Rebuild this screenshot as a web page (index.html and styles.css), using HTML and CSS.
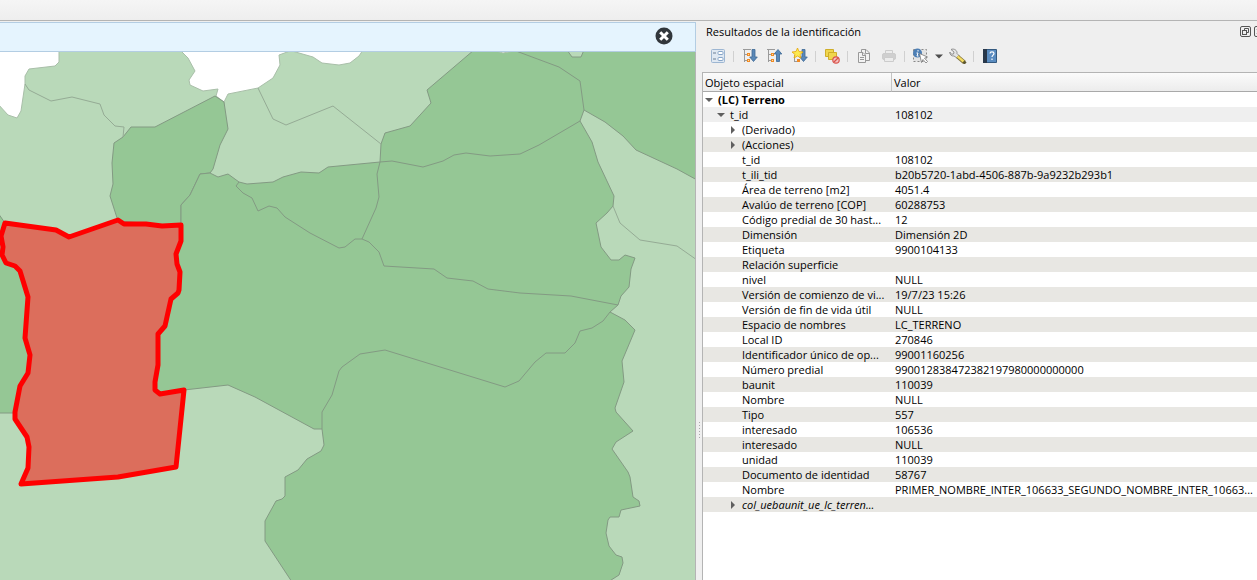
FILE: index.html
```html
<!DOCTYPE html>
<html lang="es">
<head>
<meta charset="utf-8">
<title>Resultados de la identificación</title>
<link rel="stylesheet" href="styles.css">
</head>
<body>
<div class="app">
  <header class="app-toolbar"></header>
  <main class="workspace">
    <section class="map-pane">
      <div class="message-bar">
        <button class="message-close" type="button" aria-label="Cerrar">
          <svg width="18" height="18" viewBox="0 0 18 18"><circle cx="9" cy="9" r="8.5" fill="#31363b"/><path d="M5.200 5.200l7.600 7.600M12.800 5.200l-7.600 7.600" stroke="#fff" stroke-width="3"/></svg>
        </button>
      </div>
      <svg class="map" viewBox="0 52 695 528" preserveAspectRatio="xMinYMin slice" role="img" aria-label="Mapa de terrenos">
        <rect class="plot" y="52" width="695" height="528"/>
        <path class="void" d="M-2 50H59V62L55 66 29 69 25 76V84L21 111 17 118 8 115 -2 104Z"/>
        <path class="void" d="M180 50L188 58 195 71 189 80 190 85 203 91 218 89 216 96 224 102 228 94 258 88 273 78 280 65 279 55 290 51Z"/>
        <path class="void" d="M292 51L313 57 322 63 339 65 350 63 359 56 363 50Z"/>
        <path class="plot-dark" d="M215 96L224 102 228 129 220 145 213 169 210 173 200 174 190 195 181 205V226L118 221 110 196 113 184 112 163 114 143 123 137 131 127H155Z"/>
        <path class="plot-dark" d="M-2 213L5 223 60 250V380L15 413H-2Z"/>
        <path class="plot-dark" d="M200 174L210 173 218 177 228 174 239 182 247 184 273 182 283 177 301 172 319 173 328 167 380 162 381 144 385 133 410 126 431 103 427 90 474 50H697V180L677 169 636 150 623 136 605 122 584 110 580 121 592 142 598 162 614 196 613 206 607 213 596 223 601 247 611 260H619L625 255 635 258 631 269 629 287 621 296 618 305 610 312 625 320 635 330 622 361 624 382 615 408 616 412 633 431 616 442 612 449 628 472 630 477 633 497 639 501 640 506 621 510 619 517H610L608 520 606 533 609 546 616 555 622 557 623 563 619 575 608 582H292L265 541V521L276 501 282 499 285 496V477L298 470 307 459 321 451 324 445 322 429H314L255 397 228 385 184 390 160 394 140 394 181 226V205L190 195Z"/>
        <path class="plot-notch" d="M567 50L572 57H581L584 50Z"/>
        <path class="void" d="M496 51L503 53 514 51Z"/>
        <path class="edge-light" d="M25 84L29 90 51 101 72 97 100 104 104 115 115 126 124 127 123 137M258 88L273 119 286 125 333 106 381 144M613 206L620 223 640 240 677 246 697 260"/>
        <path class="edge" d="M380 162L392 161 423 167 443 161 454 155 466 153 490 156 520 154 539 145 580 121M516 51L559 67 580 81 584 110M380 162L377 174 379 197 376 208 362 239M239 182L236 186 243 193 252 198 258 211 269 206 277 208 285 217 310 233 339 248 345 247 355 239H362L369 242 379 252 384 266 434 269 447 278 473 281 488 289 520 293 571 296 618 305M610 312L603 321 592 328 580 331 575 343 565 353H546L535 362 519 381 505 387 385 350 360 354 342 367 339 371 332 395 322 412V429"/>
        <path class="selection" d="M5 223L56 230 69 237 118 220 124 224 146 224 162 226 181 225V241L176 254 177 264 180 272 179 290 178 293 171 299 165 326 158 334V365L155 382V390L160 394 184 390 176 467 118 477 21 484 28 468 29 447 27 437 15 419V412L20 386 28 373 30 355 25 338 28 297 20 271 15 266 6 263 2 255 3 247 1 236Z"/>
      </svg>
    </section>
    <div class="splitter"><i></i><i></i><i></i><i></i><i></i><i></i></div>
    <aside class="dock">
      <div class="dock-title">
        <h1>Resultados de la identificación</h1>
        <div class="dock-buttons">
          <button type="button" aria-label="Desacoplar"><svg width="12" height="12" viewBox="0 0 12 12" fill="none" stroke="#555"><rect x=".5" y=".5" width="10" height="10" rx="1.500"/><path d="M4.500 4V2.500H8.500V6.500H7"/><rect x="2.500" y="4.500" width="4" height="4"/></svg></button>
          <button type="button" aria-label="Cerrar panel"><svg width="12" height="12" viewBox="0 0 12 12" fill="none" stroke="#555"><rect x=".5" y=".5" width="10" height="10" rx="1.500"/><path d="M3 3l5 5M8 3l-5 5" stroke-width="1.500"/></svg></button>
        </div>
      </div>
      <div class="dock-toolbar">
        <button type="button" aria-label="Ver formulario"><svg width="16" height="16" viewBox="0 0 16 16"><rect x="1.500" y="1.500" width="13" height="13" rx="1" fill="#dfe8f2" stroke="#9db6d2"/><path d="M3 5h3M3 11h3" stroke="#6b7f95"/><rect x="8" y="3.500" width="5" height="3" rx="1" fill="#fff" stroke="#86a5c8"/><rect x="8" y="9.500" width="5" height="3" rx="1" fill="#fff" stroke="#86a5c8"/></svg></button>
        <span class="separator"></span>
        <button type="button" aria-label="Expandir árbol"><svg width="16" height="16" viewBox="0 0 16 16"><path d="M1 1.500h8M2.500 2v12M3 6.500h3M3 12.500h3" stroke="#9a9a9a" fill="none"/><path d="M5 5h3v3H5zM5 11h3v3H5z" fill="#f08a24"/><path d="M6 6h1v1H6zM6 12h1v1H6z" fill="#ffe0a5"/><path d="M10 1.500h3V9h2.300L11.500 13.500 7.700 9H10z" fill="#5a88b8" stroke="#3c6894" stroke-width=".8"/></svg></button>
        <button type="button" aria-label="Contraer árbol"><svg width="16" height="16" viewBox="0 0 16 16"><path d="M0 1.500h8M1.500 2v12M2 6.500h3M2 12.500h3" stroke="#9a9a9a" fill="none"/><path d="M4 5h3v3H4zM4 11h3v3H4z" fill="#f08a24"/><path d="M5 6h1v1H5zM5 12h1v1H5z" fill="#ffe0a5"/><path d="M9.500 13.500V6H7.200L11 1.500 14.800 6h-2.300v7.500z" fill="#5a88b8" stroke="#3c6894" stroke-width=".8"/></svg></button>
        <button type="button" aria-label="Expandir resultados nuevos"><svg width="16" height="16" viewBox="0 0 16 16"><path d="M2.500 7v7M3 13.500h4" stroke="#9a9a9a" fill="none"/><path d="M5 11h3v3H5z" fill="#f08a24"/><path d="M10 1.500h3V9h2.300l-3.800 4.500L7.700 9H10z" fill="#5a88b8" stroke="#3c6894" stroke-width=".8"/><path d="M5.500 0L7 3.500l4 .5-3 2.500 1 3.500-3.500-2L2 10l1-3.500L0 4l4-.5z" fill="#fce94f" stroke="#e5a50a" stroke-width=".8"/></svg></button>
        <span class="separator"></span>
        <button type="button" aria-label="Limpiar resultados"><svg width="16" height="16" viewBox="0 0 16 16"><path d="M1.500 1.500h8v7h-8z" fill="#f0d64e" stroke="#cfae2a"/><path d="M4.500 4.500h8v7h-8z" fill="#f0d64e" stroke="#cfae2a"/><circle cx="12" cy="12" r="3.200" fill="#f5c1c1" stroke="#d9554d" stroke-width="1.200"/><path d="M10 14l4-4" stroke="#d9554d" stroke-width="1.200"/></svg></button>
        <span class="separator"></span>
        <button type="button" aria-label="Copiar"><svg width="16" height="16" viewBox="0 0 16 16" fill="#f3f3f3" stroke="#999"><path d="M5.500 1.500H10L13.500 5v7.500h-8z"/><path d="M2.500 4.500H7L9.500 7v7.500h-7z"/><path d="M6.500 4.500v3h3M9.500 2v3.500h3.500M4 9.500h4M4 11.500h4" fill="none"/></svg></button>
        <button type="button" aria-label="Imprimir" disabled><svg width="16" height="16" viewBox="0 0 16 16" fill="#ececec" stroke="#cccccc"><path d="M4.500 2.500h7v4h-7z"/><rect x="1.500" y="5.500" width="13" height="6" rx="1.500" fill="#cfcfcf"/><path d="M3.500 9.500h9v4h-9z"/></svg></button>
        <span class="separator"></span>
        <button type="button" aria-label="Identificar objetos"><svg width="17" height="16" viewBox="0 0 17 16"><path d="M1.500 1.500h13v12h-13z" fill="#e3e3e3" stroke="#888" stroke-dasharray="2 2"/><circle cx="5.500" cy="5" r="4.500" fill="#4d7fb5"/><path d="M6 2v1.500M4.500 5H6L5 8h1.500" stroke="#fff" fill="none"/><path d="M7.500 5.500l8 3.500-3 1.200 3 3.300-1.500 1.500-3-3.500-1.500 3z" fill="#fff" stroke="#777" stroke-width=".8"/></svg></button>
        <button class="menu-arrow" type="button" aria-label="Modo de identificación"><svg width="8" height="5" viewBox="0 0 8 5"><path d="M0 .5h8L4 4.500z" fill="#4d4d4d"/></svg></button>
        <button type="button" aria-label="Configuración"><svg width="18" height="16" viewBox="0 0 18 16"><path d="M2 1.500l3 2.500-.5 2-2 .2L.8 4c-.3 2 1.500 4.500 4.200 4L8 10l2-2.500-2-2C8.500 2.500 5 0 2 1.500z" fill="#e4e4e4" stroke="#888" stroke-width=".9"/><path d="M8.500 8.500l7 6" stroke="#81723c" stroke-width="4"/><path d="M8.500 8.300l6.500 5.500" stroke="#f4dc62" stroke-width="2.400"/><path d="M14.500 13.500l2 2" stroke="#5d572f" stroke-width="3"/></svg></button>
        <span class="separator"></span>
        <button type="button" aria-label="Ayuda"><svg width="16" height="16" viewBox="0 0 16 16"><path d="M1.500 1.500h13v13h-13z" fill="#5a8cc0" stroke="#355a80"/><path d="M1 1h4v14H1z" fill="#28384a"/><path d="M8 5.500c0-2.200 4-2.200 4 0 0 1.600-2 1.700-2 3.500M10 10.500v1.500" fill="none" stroke="#fff" stroke-width="1.200"/></svg></button>
      </div>
      <div class="results">
        <table>
          <colgroup><col class="col-name"><col></colgroup>
          <thead><tr><th scope="col">Objeto espacial</th><th scope="col">Valor</th></tr></thead>
          <tbody>
            <tr class="layer"><td><button class="toggle open" type="button" aria-label="Contraer"></button>(LC) Terreno</td><td></td></tr>
            <tr class="feature"><td><button class="toggle open" type="button" aria-label="Contraer"></button>t_id</td><td>108102</td></tr>
            <tr><td><button class="toggle" type="button" aria-label="Expandir"></button>(Derivado)</td><td></td></tr>
            <tr><td><button class="toggle" type="button" aria-label="Expandir"></button>(Acciones)</td><td></td></tr>
            <tr><td>t_id</td><td>108102</td></tr>
            <tr><td>t_ili_tid</td><td>b20b5720-1abd-4506-887b-9a9232b293b1</td></tr>
            <tr><td>Área de terreno [m2]</td><td>4051.4</td></tr>
            <tr><td>Avalúo de terreno [COP]</td><td>60288753</td></tr>
            <tr><td>Código predial de 30 hast...</td><td>12</td></tr>
            <tr><td>Dimensión</td><td>Dimensión 2D</td></tr>
            <tr><td>Etiqueta</td><td>9900104133</td></tr>
            <tr><td>Relación superficie</td><td></td></tr>
            <tr><td>nivel</td><td>NULL</td></tr>
            <tr><td>Versión de comienzo de vi...</td><td>19/7/23 15:26</td></tr>
            <tr><td>Versión de fin de vida útil</td><td>NULL</td></tr>
            <tr><td>Espacio de nombres</td><td>LC_TERRENO</td></tr>
            <tr><td>Local ID</td><td>270846</td></tr>
            <tr><td>Identificador único de op...</td><td>99001160256</td></tr>
            <tr><td>Número predial</td><td>990012838472382197980000000000</td></tr>
            <tr><td>baunit</td><td>110039</td></tr>
            <tr><td>Nombre</td><td>NULL</td></tr>
            <tr><td>Tipo</td><td>557</td></tr>
            <tr><td>interesado</td><td>106536</td></tr>
            <tr><td>interesado</td><td>NULL</td></tr>
            <tr><td>unidad</td><td>110039</td></tr>
            <tr><td>Documento de identidad</td><td>58767</td></tr>
            <tr><td>Nombre</td><td>PRIMER_NOMBRE_INTER_106633_SEGUNDO_NOMBRE_INTER_10663...</td></tr>
            <tr class="relation"><td><button class="toggle" type="button" aria-label="Expandir"></button>col_uebaunit_ue_lc_terren...</td><td></td></tr>
          </tbody>
        </table>
      </div>
    </aside>
  </main>
</div>
</body>
</html>
```
FILE: styles.css
```css
* { box-sizing: border-box; }

body {
  margin: 0;
  background: #efefef;
  color: #000;
  font: 11px/15px "Open Sans", "Noto Sans", sans-serif;
}

button {
  display: flex;
  align-items: center;
  justify-content: center;
  margin: 0;
  padding: 0;
  border: 0;
  background: none;
}

.app {
  display: flex;
  flex-direction: column;
  height: 100vh;
  overflow: hidden;
}

.app-toolbar {
  flex: none;
  height: 21px;
  background: linear-gradient(#f5f5f5, #eeeeee);
  border-bottom: 1px solid #b4b4b4;
}

.workspace {
  flex: 1;
  display: grid;
  grid-template-columns: minmax(0, 696fr) 6px minmax(0, 555fr);
  min-height: 0;
}

/* Map */
.map-pane {
  display: flex;
  flex-direction: column;
  min-height: 0;
  padding-top: 1px;
}

.message-bar {
  flex: none;
  display: flex;
  align-items: center;
  justify-content: flex-end;
  height: 30px;
  padding: 0 22px 2px 0;
  background: #e5f4fe;
  border: 1px solid #b3cde3;
  border-left: 0;
}

.map {
  display: block;
  flex: 1;
  width: 100%;
  min-height: 0;
  border-right: 1px solid #b4b4b4;
}

.map path { stroke-linejoin: round; }
.plot { fill: #b9d9b9; }
.plot-dark { fill: #95c795; stroke: #839a83; }
.plot-notch { fill: #b9d9b9; stroke: #839a83; }
.void { fill: #fff; stroke: #a9bfa9; }
.edge { fill: none; stroke: #839a83; }
.edge-light { fill: none; stroke: #95ab95; }
.selection { fill: #dc6e5c; stroke: #f00; stroke-width: 5; }

.splitter {
  display: flex;
  flex-direction: column;
  align-items: center;
  gap: 2px;
  padding-top: 401px;
}

.splitter i {
  width: 1px;
  height: 1px;
  background: #aaa;
}

/* Dock */
.dock {
  display: flex;
  flex-direction: column;
  min-width: 0;
  min-height: 0;
  overflow: hidden;
}

.dock-title {
  flex: none;
  display: flex;
  align-items: center;
  justify-content: space-between;
  height: 21px;
  padding-left: 4px;
}

.dock-title h1 {
  margin: 0;
  font-size: 11px;
  font-weight: 400;
}

.dock-buttons {
  display: flex;
  gap: 2px;
  margin-right: -9px;
}

.dock-toolbar {
  flex: none;
  display: flex;
  align-items: center;
  height: 30px;
  padding: 0 3px 2px;
}

.dock-toolbar button {
  flex: none;
  width: 25px;
  height: 24px;
}

.dock-toolbar .menu-arrow { width: 12px; }

.separator {
  flex: none;
  width: 7px;
  height: 11px;
  background: linear-gradient(#d0d0d0, #d0d0d0) center / 1px 100% no-repeat;
}

/* Results tree */
.results {
  flex: 1;
  min-height: 0;
  overflow: hidden;
  background: #fff;
  border-top: 1px solid #b4b4b4;
  border-left: 1px solid #b4b4b4;
}

table {
  width: 100%;
  table-layout: fixed;
  border-collapse: separate;
  border-spacing: 0;
}

.col-name { width: 189px; }

th {
  height: 19px;
  padding: 0 2px;
  text-align: left;
  font-weight: 400;
  background: linear-gradient(#fbfbfb, #ececec);
  border-bottom: 1px solid #a9a9a9;
}

th:first-child { border-right: 1px solid #c4c4c4; }

td {
  height: 15px;
  padding: 0 0 0 3px;
  white-space: nowrap;
  overflow: hidden;
}

td:first-child { padding-left: 39px; }

tbody tr:nth-child(even) { background: #e8e7e3; }
tbody tr.feature { background: #efefef; }
.layer td:first-child { padding-left: 15px; font-weight: 700; }
.feature td:first-child { padding-left: 27px; }
.relation { font-style: italic; }

.toggle {
  float: left;
  width: 14px;
  height: 15px;
  margin-left: -16px;
  margin-right: 2px;
}

.toggle::before {
  content: "";
  border: 4px solid transparent;
  border-left: 4px solid #5f5f5f;
  border-right: 0;
}

.toggle.open::before {
  border: 4px solid transparent;
  border-top: 4px solid #5f5f5f;
  border-bottom: 0;
}
```
